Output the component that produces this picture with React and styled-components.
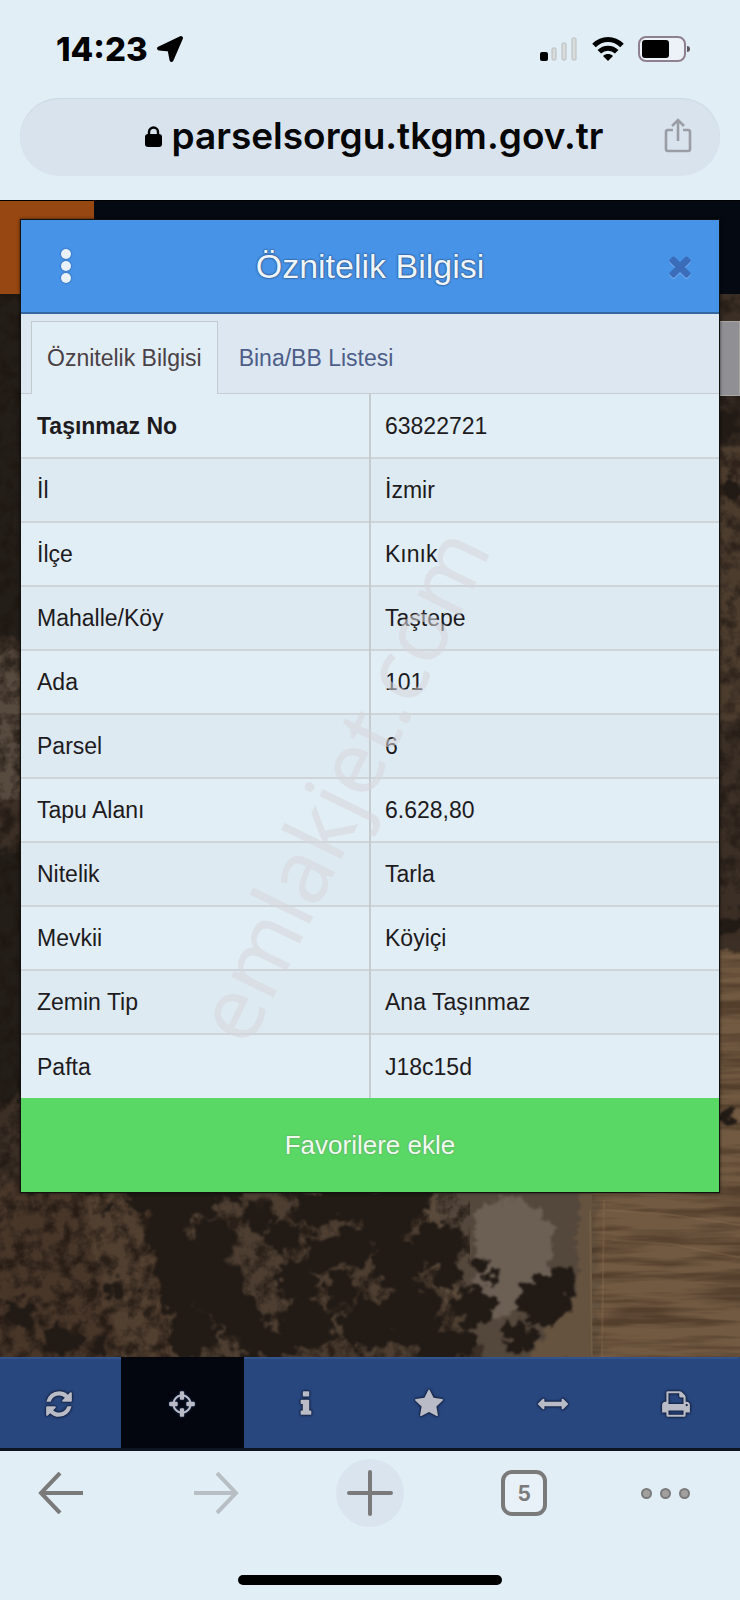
import { useState } from 'react';
import styled, { createGlobalStyle } from 'styled-components';

const GlobalStyle = createGlobalStyle`
  *,
  *::before,
  *::after {
    box-sizing: border-box;
  }

  body {
    margin: 0;
    background-color: #e2eef6;
    font-family: "Liberation Sans", Arial, sans-serif;
    overflow-x: hidden;
  }

  button {
    margin: 0;
    padding: 0;
    border: 0;
    background: none;
    color: inherit;
    font: inherit;
    cursor: pointer;
  }

  svg {
    display: block;
  }
`;

const Page = styled.div`
  position: relative;
  min-height: 100vh;
  display: flex;
  flex-direction: column;
`;

const StatusBar = styled.header`
  display: flex;
  align-items: center;
  justify-content: space-between;
  height: 98px;
  padding: 0 50px 0 56px;
`;

const Clock = styled.div`
  display: flex;
  align-items: center;
  gap: 8px;
  color: #000;
  font: 800 33px/40px Inter, sans-serif;
`;

const StatusIcons = styled.div`
  display: flex;
  align-items: center;
  gap: 14px;
`;

const AddressRow = styled.div`
  padding: 0 20px 24px;
`;

const AddressBar = styled.div`
  display: grid;
  grid-template-columns: 72px 1fr 64px;
  align-items: center;
  height: 78px;
  padding: 0 10px;
  border-radius: 39px;
  background-color: #d8e3ee;
  box-shadow: inset 0 1px 1px #ccd8e0;
`;

const AddressButton = styled.button`
  grid-column: 2;
  display: flex;
  align-items: center;
  justify-content: center;
  gap: 10px;
  padding-bottom: 2px;
  color: #060606;
  font: 600 37px/44px Inter, sans-serif;
`;

const ShareButton = styled.button`
  justify-self: center;
  padding-bottom: 4px;
`;

const MapArea = styled.main`
  position: relative;
  flex: 1 0 auto;
  padding: 19px 20px 164px;
  background-color: #32271f;
  overflow: hidden;
`;

const MapBackdrop = styled.div`
  position: absolute;
  inset: 0;
  display: flex;
  flex-direction: column;

  svg {
    flex: 1;
    width: 100%;
    min-height: 0;
  }
`;

const AppBar = styled.div`
  height: 94px;
  border-top: 1px solid #000;
  background-color: #050911;
`;

const AppBarLogo = styled.div`
  width: 94px;
  height: 100%;
  background-color: #974711;
`;

const MapControl = styled.div`
  position: absolute;
  top: 121px;
  right: 0;
  width: 24px;
  height: 75px;
  background-color: #8f8f94;
  border: 1px solid #a8a6a2;
`;

const Modal = styled.section`
  position: relative;
  border: 1px solid #11120f;
  background-color: #e2eef5;
  box-shadow: 0 0 3px rgba(0, 0, 0, 0.6);
`;

const ModalHeader = styled.div`
  display: grid;
  grid-template-columns: 90px 1fr 90px;
  align-items: center;
  height: 94px;
  border-bottom: 2px solid #35669f;
  background-color: #4793e8;
`;

const ModalTitle = styled.h1`
  margin: 0;
  color: #eef5fb;
  font-size: 34px;
  font-weight: 400;
  line-height: 40px;
  text-align: center;
  text-shadow: 0 0 2px #2a4c7c, 0 0 2px #2a4c7c;
`;

const MenuButton = styled.button`
  display: flex;
  flex-direction: column;
  align-items: center;
  gap: 2px;
`;

const MenuDot = styled.span`
  width: 10px;
  height: 10px;
  border-radius: 50%;
  background-color: #e9f2fa;
  box-shadow: 0 0 2px #23508a;
`;

const CloseButton = styled.button`
  justify-self: end;
  padding-right: 23px;
  color: #3a6cb9;
  filter: drop-shadow(0 1px 0 #7fb4ef);
`;

const TabList = styled.div`
  display: flex;
  height: 80px;
  padding: 7px 10px 0;
  background-color: #dce7f1;
  border-bottom: 1px solid #c6ccd0;
`;

const Tab = styled.button`
  height: 73px;
  padding: 0 15px;
  border: 1px solid ${({ $active }) => ($active ? '#c3cace' : 'transparent')};
  border-bottom: 0;
  background-color: ${({ $active }) => ($active ? '#e2eef5' : 'transparent')};
  color: ${({ $active }) => ($active ? '#4a4147' : '#4d5e88')};
  font-size: 23px;
  line-height: 28px;
  white-space: nowrap;

  & + & {
    padding-left: 20px;
  }
`;

const InfoTable = styled.table`
  width: 100%;
  border-collapse: collapse;
  table-layout: fixed;
  color: #1d1b1d;
  font-size: 23px;
  line-height: 28px;
`;

const InfoRow = styled.tr`
  height: 64px;
  background-color: #e2eef5;

  &:nth-child(even) {
    background-color: #deeaf2;
  }

  & + & {
    border-top: 2px solid #ced4d8;
  }
`;

const InfoLabel = styled.th`
  padding: 0 16px;
  border-right: 2px solid #c6cbce;
  font-weight: ${({ $strong }) => ($strong ? 700 : 400)};
  text-align: left;
`;

const InfoValue = styled.td`
  padding: 0 14px;
`;

const FavoriteButton = styled.button`
  display: block;
  width: 100%;
  height: 94px;
  background-color: #5ad865;
  color: #eefbee;
  font-size: 26px;
  line-height: 32px;
  text-shadow: 0 0 2px #6d8a70;
`;

const Watermark = styled.div`
  position: absolute;
  top: 49%;
  left: 46%;
  transform: translate(-50%, -50%) rotate(-64deg);
  color: rgba(213, 214, 218, 0.55);
  font: 400 88px/96px "Noto Sans", sans-serif;
  pointer-events: none;
`;

const Toolbar = styled.nav`
  display: grid;
  grid-template-columns: repeat(6, 1fr);
  height: 94px;
  margin-left: -3px;
  padding-right: 2px;
  border-bottom: 3px solid #0c1421;
  background-color: #28477f;
`;

const ToolButton = styled.button`
  display: flex;
  align-items: center;
  justify-content: center;
  border-top: 2px solid ${({ $active }) => ($active ? '#03060c' : '#33538c')};
  background-color: ${({ $active }) => ($active ? '#03060f' : 'transparent')};
  color: #b9bbc6;

  svg {
    filter: drop-shadow(0 0 1px #101c38) drop-shadow(0 0 1px #101c38);
  }
`;

const BrowserBar = styled.footer`
  display: grid;
  grid-template-columns: 18fr 18fr 18fr 18fr 15fr;
  justify-items: center;
  align-items: center;
  height: 84px;
  margin-left: -16px;
  padding-right: 10px;
  color: #7b7a7b;
`;

const BrowserButton = styled.button`
  display: flex;
  align-items: center;
  justify-content: center;
  width: 68px;
  height: 68px;
  border-radius: 50%;
  background-color: ${({ $filled }) => ($filled ? '#d9e4ef' : 'transparent')};
  opacity: ${({ $dimmed }) => ($dimmed ? 0.4 : 1)};
`;

const TabCount = styled.span`
  width: 46px;
  height: 46px;
  border: 4px solid #7b7a7b;
  border-radius: 11px;
  background-color: #e8f1f8;
  font: 700 21px/39px Inter, sans-serif;
  text-align: center;
`;

const Dots = styled.span`
  display: flex;
  gap: 8px;
`;

const Dot = styled.span`
  width: 11px;
  height: 11px;
  border: 2px solid #7b7a7b;
  border-radius: 50%;
  background-color: #a1a09f;
`;

const HomeArea = styled.div`
  display: flex;
  justify-content: center;
  padding: 40px 0 15px;
`;

const HomeIndicator = styled.div`
  width: 264px;
  height: 10px;
  border-radius: 5px;
  background-color: #000;
`;

const rows = [
  { label: 'Taşınmaz No', value: '63822721', strong: true },
  { label: 'İl', value: 'İzmir' },
  { label: 'İlçe', value: 'Kınık' },
  { label: 'Mahalle/Köy', value: 'Taştepe' },
  { label: 'Ada', value: '101' },
  { label: 'Parsel', value: '6' },
  { label: 'Tapu Alanı', value: '6.628,80' },
  { label: 'Nitelik', value: 'Tarla' },
  { label: 'Mevkii', value: 'Köyiçi' },
  { label: 'Zemin Tip', value: 'Ana Taşınmaz' },
  { label: 'Pafta', value: 'J18c15d' },
];

const tabs = ['Öznitelik Bilgisi', 'Bina/BB Listesi'];

const tools = [
  {
    name: 'Yenile',
    path: 'M1639 1056q0 5-1 7-64 268-268 434.5t-478 166.5q-146 0-282.5-55t-243.5-157l-129 129q-19 19-45 19t-45-19-19-45v-448q0-26 19-45t45-19h448q26 0 45 19t19 45-19 45l-137 137q71 66 161 102t187 36q134 0 250-65t186-179q11-17 53-117 8-23 30-23h192q13 0 22.5 9.5t9.5 22.5zm25-800v448q0 26-19 45t-45 19h-448q-26 0-45-19t-19-45 19-45l138-138q-148-137-349-137-134 0-250 65t-186 179q-11 17-53 117-8 23-30 23h-199q-13 0-22.5-9.5t-9.5-22.5v-7q65-268 270-434.5t480-166.5q146 0 284 55.5t245 156.5l130-129q19-19 45-19t45 19 19 45z',
  },
  {
    name: 'Konum',
    path: 'M1325 1024h-109q-26 0-45-19t-19-45v-128q0-26 19-45t45-19h109q-32-108-112.5-188.5t-188.5-112.5v109q0 26-19 45t-45 19h-128q-26 0-45-19t-19-45v-109q-108 32-188.5 112.5t-112.5 188.5h109q26 0 45 19t19 45v128q0 26-19 45t-45 19h-109q32 108 112.5 188.5t188.5 112.5v-109q0-26 19-45t45-19h128q26 0 45 19t19 45v109q108-32 188.5-112.5t112.5-188.5zm339-192v128q0 26-19 45t-45 19h-143q-37 161-154.5 278.5t-278.5 154.5v143q0 26-19 45t-45 19h-128q-26 0-45-19t-19-45v-143q-161-37-278.5-154.5t-154.5-278.5h-143q-26 0-45-19t-19-45v-128q0-26 19-45t45-19h143q37-161 154.5-278.5t278.5-154.5v-143q0-26 19-45t45-19h128q26 0 45 19t19 45v143q161 37 278.5 154.5t154.5 278.5h143q26 0 45 19t19 45z',
  },
  {
    name: 'Bilgi',
    path: 'M1216 1344v128q0 26-19 45t-45 19h-512q-26 0-45-19t-19-45v-128q0-26 19-45t45-19h64v-384h-64q-26 0-45-19t-19-45v-128q0-26 19-45t45-19h384q26 0 45 19t19 45v576h64q26 0 45 19t19 45zm-128-1152v192q0 26-19 45t-45 19h-256q-26 0-45-19t-19-45v-192q0-26 19-45t45-19h256q26 0 45 19t19 45z',
  },
  {
    name: 'Favoriler',
    path: 'M1728 647q0 22-26 48l-363 354 86 500q1 7 1 20 0 21-10.5 35.5t-30.5 14.5q-19 0-40-12l-449-236-449 236q-22 12-40 12-21 0-31.5-14.5t-10.5-35.5q0-6 2-20l86-500-364-354q-25-27-25-48 0-37 56-46l502-73 225-455q19-41 49-41t49 41l225 455 502 73q56 9 56 46z',
  },
  {
    name: 'Ölçüm',
    path: 'M1792 896q0 26-19 45l-256 256q-19 19-45 19t-45-19-19-45v-128h-1024v128q0 26-19 45t-45 19-45-19l-256-256q-19-19-19-45t19-45l256-256q19-19 45-19t45 19 19 45v128h1024v-128q0-26 19-45t45-19 45 19l256 256q19 19 19 45z',
  },
  {
    name: 'Yazdır',
    path: 'M448 1536h896v-256h-896v256zm0-640h896v-384h-160q-40 0-68-28t-28-68v-160h-640v640zm1152 64q0-26-19-45t-45-19-45 19-19 45 19 45 45 19 45-19 19-45zm128 0v416q0 13-9.5 22.5t-22.5 9.5h-224v160q0 40-28 68t-68 28h-960q-40 0-68-28t-28-68v-160h-224q-13 0-22.5-9.5t-9.5-22.5v-416q0-79 56.5-135.5t135.5-56.5h64v-544q0-40 28-68t68-28h672q40 0 88 20t76 48l152 152q28 28 48 76t20 88v256h64q79 0 135.5 56.5t56.5 135.5z',
  },
];

const closePath =
  'M1490 1322q0 40-28 68l-136 136q-28 28-68 28t-68-28l-294-294-294 294q-28 28-68 28t-68-28l-136-136q-28-28-28-68t28-68l294-294-294-294q-28-28-28-68t28-68l136-136q28-28 68-28t68 28l294 294 294-294q28-28 68-28t68 28l136 136q28 28 28 68t-28 68l-294 294 294 294q28 28 28 68z';

// tree crowns on the aerial view: x, y, radius
const trees = [
  [150, 912, 20], [172, 930, 23], [200, 914, 20], [160, 950, 16], [184, 980, 29],
  [215, 956, 22], [178, 1012, 20], [214, 1002, 28], [192, 1050, 25], [238, 1030, 24],
  [256, 1056, 20], [230, 908, 12], [258, 934, 15], [284, 954, 17], [314, 926, 21],
  [350, 915, 23], [296, 996, 21], [324, 970, 19], [306, 1042, 27], [340, 1006, 16],
  [354, 962, 20], [366, 1040, 25], [385, 936, 27], [405, 912, 24], [398, 980, 26],
  [412, 1032, 31], [440, 960, 24], [448, 990, 14], [438, 1064, 20], [474, 1023, 21],
  [462, 1058, 14], [520, 1053, 16], [544, 1016, 26], [556, 1000, 16], [478, 982, 7],
  [492, 994, 6], [22, 1032, 14], [58, 1054, 15], [114, 1008, 9], [76, 1060, 8],
  [102, 1060, 9], [106, 926, 4], [280, 1062, 12], [730, 834, 9], [722, 140, 14],
  [734, 205, 11],
];

const StatusGlyphs = () => (
  <StatusIcons>
    <svg width="38" height="24" viewBox="0 0 38 24" aria-hidden="true">
      <rect x="0" y="15" width="8" height="9" rx="2" fill="#000" />
      <g fill="#d8dcdc" stroke="#b9bdbd">
        <rect x="12" y="11" width="4" height="12" rx="1" />
        <rect x="22" y="6" width="4" height="17" rx="1" />
        <rect x="32" y="1" width="4" height="22" rx="1" />
      </g>
    </svg>
    <svg width="32" height="24" viewBox="0 0 32 24" aria-hidden="true">
      <g fill="none" stroke="#000" strokeWidth="5">
        <path d="M2 8.5C10 .5 22 .5 30 8.5" />
        <path d="M7.3 14.8c5-4.8 12.4-4.8 17.4 0" />
      </g>
      <path d="M11 19c3-2.6 7-2.6 10 0L16 24z" fill="#000" />
    </svg>
    <svg width="52" height="26" viewBox="0 0 52 26" aria-hidden="true">
      <rect x="1" y="1" width="46" height="24" rx="7" fill="#edf2f8" stroke="#8f8090" strokeWidth="2" />
      <rect x="4" y="4" width="27" height="18" rx="3" fill="#000" />
      <path d="M49 10q3 0 3 3t-3 3z" fill="#5c585c" />
    </svg>
  </StatusIcons>
);

const AerialView = () => (
  <svg viewBox="0 94 740 1063" preserveAspectRatio="none" aria-hidden="true">
    <defs>
      <filter id="rough" x="-5%" y="-5%" width="110%" height="110%" colorInterpolationFilters="sRGB">
        <feTurbulence type="fractalNoise" baseFrequency="0.09" numOctaves="4" seed="4" />
        <feDisplacementMap in="SourceGraphic" scale="26" xChannelSelector="R" yChannelSelector="G" />
        <feGaussianBlur stdDeviation="0.8" />
      </filter>
      <filter id="grain" x="0" y="0" width="100%" height="100%" colorInterpolationFilters="sRGB">
        <feTurbulence type="fractalNoise" baseFrequency="0.07" numOctaves="4" seed="9" />
        <feColorMatrix values="0 0 0 0 0.11  0 0 0 0 0.08  0 0 0 0 0.06  3 0 0 0 -1.2" />
      </filter>
      <filter id="furrow" x="0" y="0" width="100%" height="100%" colorInterpolationFilters="sRGB">
        <feTurbulence type="fractalNoise" baseFrequency="0.01 0.11" numOctaves="3" seed="2" />
        <feColorMatrix values="0 0 0 0 0.25  0 0 0 0 0.18  0 0 0 0 0.12  3 0 0 0 -1.2" />
      </filter>
    </defs>
    <rect y="94" width="740" height="1063" fill="#3b2f26" />
    <g filter="url(#rough)">
      <path d="M-10 450h40v150h-40z" fill="#574a3e" />
      <path d="M-10 80h40v360h-40zM-10 650h40v250h-40z" fill="#241e19" />
      <path d="M710 180h40v70h-40z" fill="#322820" />
      <path d="M710 250h40v270h-40z" fill="#4c3c2e" />
      <path d="M-10 980h180v190h-180z" fill="#483629" />
      <path d="M128 980l22 60 12 120h-40l-22-90-20-90z" fill="#513f30" />
      <path d="M420 985h180v180h-110l-60-90z" fill="#54473b" />
      <path d="M475 1010q50-30 70 10t-20 85q-30 20-52-5z" fill="#6c5f54" />
      <path d="M582 960l30 0-6 200h-80l50-70z" fill="#66533f" />
      <path d="M596 960h160v210h-156zM710 750h40v230h-40z" fill="#725a42" />
    </g>
    <rect x="592" y="980" width="148" height="177" filter="url(#furrow)" opacity="0.6" />
    <rect x="715" y="700" width="25" height="280" filter="url(#furrow)" opacity="0.6" />
    <path d="M140 980l24 70 6 107h240l60-30-40-147z" fill="#5f4d3c" opacity="0.5" />
    <rect y="94" width="470" height="1063" filter="url(#grain)" opacity="0.7" />
    <rect x="715" y="94" width="25" height="600" filter="url(#grain)" opacity="0.6" />
    <g fill="#211a15" filter="url(#rough)">
      <path d="M715 720l35-12v22l-35 8z" />
      {trees.map(([x, y, r]) => (
        <circle key={`${x}-${y}`} cx={x} cy={y + 84} r={r} />
      ))}
    </g>
    <g fill="none" stroke="#8a7052" strokeWidth="2" opacity="0.3">
      <path d="M606 1010l60 4 80 12M612 1040l60 4 70 14M590 1010l2 150M604 1000l-2 160" />
    </g>
  </svg>
);

const ToolIcon = ({ path, size }) => (
  <svg width={size} height={size} viewBox="0 0 1792 1792" fill="currentColor" aria-hidden="true">
    <path d={path} />
  </svg>
);

export default function App() {
  const [activeTab, setActiveTab] = useState(tabs[0]);
  const [activeTool, setActiveTool] = useState('Konum');

  return (
    <>
      <GlobalStyle />
      <Page>
        <StatusBar>
          <Clock>
            14:23
            <svg width="28" height="28" viewBox="0 0 28 28" aria-hidden="true">
              <path
                d="M25 3L3 13.5 13.5 14.5 15.5 25z"
                fill="#000"
                stroke="#000"
                strokeWidth="4"
                strokeLinejoin="round"
              />
            </svg>
          </Clock>
          <StatusGlyphs />
        </StatusBar>

        <AddressRow>
          <AddressBar>
            <AddressButton type="button">
              <svg width="17" height="21" viewBox="0 0 17 21" aria-hidden="true">
                <rect y="8" width="17" height="13" rx="3" fill="#000" />
                <path d="M4 9V6a4.5 4.5 0 0 1 9 0v3" fill="none" stroke="#000" strokeWidth="2.4" />
              </svg>
              parselsorgu.tkgm.gov.tr
            </AddressButton>
            <ShareButton type="button" aria-label="Paylaş">
              <svg
                width="28"
                height="36"
                viewBox="0 0 28 36"
                fill="none"
                stroke="#9a9ea4"
                strokeWidth="2.6"
                aria-hidden="true"
              >
                <path d="M9 13H4q-2 0-2 2v17q0 2 2 2h20q2 0 2-2V15q0-2-2-2h-5M14 24V3M8 9l6-6 6 6" />
              </svg>
            </ShareButton>
          </AddressBar>
        </AddressRow>

        <MapArea>
          <MapBackdrop>
            <AppBar>
              <AppBarLogo />
            </AppBar>
            <AerialView />
            <MapControl />
          </MapBackdrop>

          <Modal>
            <ModalHeader>
              <MenuButton type="button" aria-label="Menü">
                <MenuDot />
                <MenuDot />
                <MenuDot />
              </MenuButton>
              <ModalTitle>Öznitelik Bilgisi</ModalTitle>
              <CloseButton type="button" aria-label="Kapat">
                <ToolIcon path={closePath} size={32} />
              </CloseButton>
            </ModalHeader>

            <TabList role="tablist">
              {tabs.map((tab) => (
                <Tab
                  key={tab}
                  type="button"
                  role="tab"
                  aria-selected={activeTab === tab}
                  $active={activeTab === tab}
                  onClick={() => setActiveTab(tab)}
                >
                  {tab}
                </Tab>
              ))}
            </TabList>

            <InfoTable>
              <tbody>
                {rows.map((row) => (
                  <InfoRow key={row.label}>
                    <InfoLabel scope="row" $strong={row.strong}>
                      {row.label}
                    </InfoLabel>
                    <InfoValue>{row.value}</InfoValue>
                  </InfoRow>
                ))}
              </tbody>
            </InfoTable>

            <FavoriteButton type="button">Favorilere ekle</FavoriteButton>
          </Modal>
        </MapArea>

        <Toolbar>
          {tools.map((tool) => (
            <ToolButton
              key={tool.name}
              type="button"
              aria-label={tool.name}
              $active={activeTool === tool.name}
              onClick={() => setActiveTool(tool.name)}
            >
              <ToolIcon path={tool.path} size={30} />
            </ToolButton>
          ))}
        </Toolbar>

        <BrowserBar>
          <BrowserButton type="button" aria-label="Geri">
            <svg width="46" height="42" viewBox="0 0 46 42" fill="none" stroke="currentColor" strokeWidth="4">
              <path d="M45 21H3M22 1L3 21l19 20" />
            </svg>
          </BrowserButton>
          <BrowserButton type="button" aria-label="İleri" $dimmed>
            <svg width="46" height="42" viewBox="0 0 46 42" fill="none" stroke="currentColor" strokeWidth="4">
              <path d="M1 21h42M24 1l19 20-19 20" />
            </svg>
          </BrowserButton>
          <BrowserButton type="button" aria-label="Yeni sekme" $filled>
            <svg width="46" height="46" viewBox="0 0 46 46" fill="none" stroke="currentColor" strokeWidth="4">
              <path d="M23 2v42M2 23h42" strokeLinecap="round" />
            </svg>
          </BrowserButton>
          <BrowserButton type="button" aria-label="Sekmeler">
            <TabCount>5</TabCount>
          </BrowserButton>
          <BrowserButton type="button" aria-label="Diğer">
            <Dots>
              <Dot />
              <Dot />
              <Dot />
            </Dots>
          </BrowserButton>
        </BrowserBar>

        <HomeArea>
          <HomeIndicator />
        </HomeArea>

        <Watermark aria-hidden="true">emlakjet.com</Watermark>
      </Page>
    </>
  );
}
